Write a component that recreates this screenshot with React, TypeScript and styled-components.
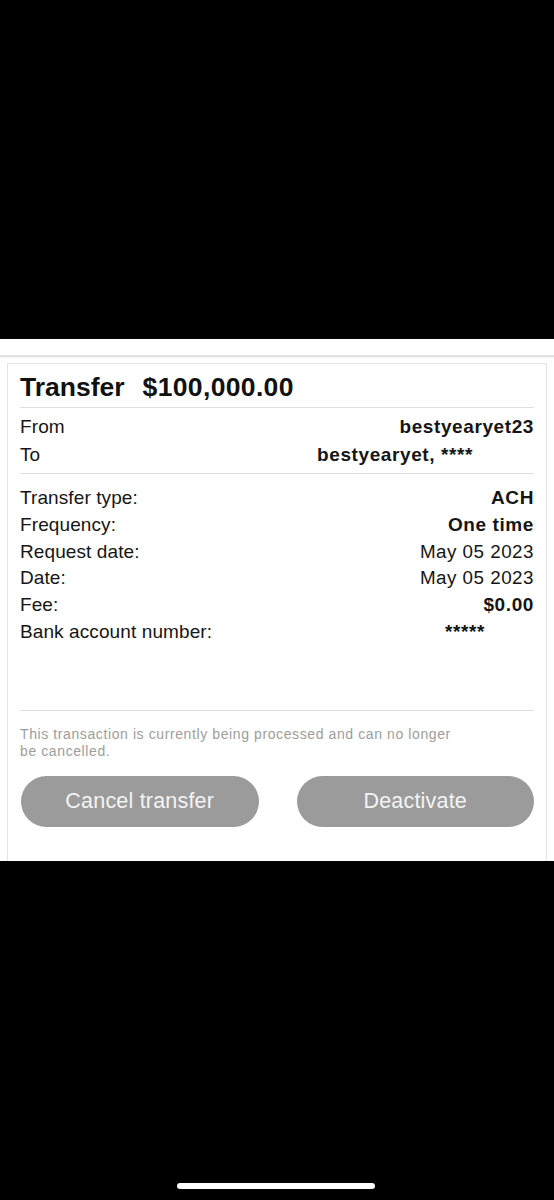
import React from "react";
import styled, { createGlobalStyle } from "styled-components";

const Global = createGlobalStyle`
  html, body { margin: 0; padding: 0; background: #000; }
  body { font-family: "Liberation Sans", Arial, sans-serif; -webkit-font-smoothing: antialiased; }
  * { box-sizing: border-box; }
`;

const Page = styled.div`
  width: 554px;
  height: 1200px;
  display: flex;
  flex-direction: column;
  background: #000;
  overflow: hidden;
`;

const BlackBand = styled.div<{ $h: number }>`
  height: ${(p) => p.$h}px;
  flex: 0 0 auto;
  background: #000;
`;

const Sheet = styled.div`
  height: 522px;
  flex: 0 0 auto;
  background: #fff;
  overflow: hidden;
  display: flex;
  flex-direction: column;
`;

const HeaderStrip = styled.div`
  flex: 0 0 auto;
  height: 18px;
  border-bottom: 2px solid #e3e3e3;
  box-shadow: 0 1px 1px rgba(0, 0, 0, 0.04);
`;

const Card = styled.section`
  flex: 0 0 auto;
  margin: 6px 7px 0;
  border: 1.5px solid #e4e4e4;
  border-bottom: none;
  padding: 7px 12px 60px;
  display: flex;
  flex-direction: column;
`;

const TitleRow = styled.h1`
  margin: 0;
  display: flex;
  gap: 18px;
  font-size: 26.5px;
  line-height: 32px;
  font-weight: 700;
  color: #111;
`;

const Amount = styled.span`
  letter-spacing: 0.35px;
`;

const Divider = styled.hr<{ $top: number; $bottom: number }>`
  border: none;
  height: 1px;
  background: #dedede;
  margin: ${(p) => p.$top}px 0 ${(p) => p.$bottom}px;
`;

const Group = styled.div<{ $lh: number }>`
  display: flex;
  flex-direction: column;
  line-height: ${(p) => p.$lh}px;
`;

const Row = styled.div`
  display: flex;
  justify-content: space-between;
  align-items: baseline;
  font-size: 19px;
  letter-spacing: 0.1px;
  color: #151515;
`;

const Label = styled.span``;

const Value = styled.span<{ $bold?: boolean; $inset?: number }>`
  font-weight: ${(p) => (p.$bold ? 700 : 400)};
  letter-spacing: ${(p) => (p.$bold ? "0.6px" : "0.5px")};
  margin-right: ${(p) => p.$inset ?? 0}px;
  font-size: ${(p) => (p.$bold ? "19px" : "18.8px")};
`;

const Spacer = styled.div<{ $h: number }>`
  height: ${(p) => p.$h}px;
`;

const Note = styled.p`
  margin: 0;
  font-size: 14px;
  line-height: 17px;
  letter-spacing: 0.6px;
  color: #9d9d9d;
`;

const Actions = styled.div`
  margin-top: 16px;
  display: grid;
  grid-template-columns: 1fr 1fr;
  gap: 38px;
  padding-left: 1px;
`;

const PillButton = styled.button`
  height: 51px;
  border: none;
  border-radius: 26px;
  background: #9b9b9b;
  color: #f4f4f4;
  font-family: "Liberation Sans", Arial, sans-serif;
  font-size: 21.5px;
  letter-spacing: 0.2px;
  padding: 0;
`;

const BottomArea = styled.div`
  flex: 1 1 auto;
  background: #000;
  display: flex;
  justify-content: center;
  padding-top: 322px;
`;

const HomeIndicator = styled.div`
  width: 198px;
  height: 6px;
  border-radius: 3px;
  background: #fff;
  margin-left: -2px;
`;

const details: { label: string; value: string; bold?: boolean; inset?: number }[] = [
  { label: "Transfer type:", value: "ACH", bold: true },
  { label: "Frequency:", value: "One time", bold: true },
  { label: "Request date:", value: "May 05 2023" },
  { label: "Date:", value: "May 05 2023" },
  { label: "Fee:", value: "$0.00", bold: true },
  { label: "Bank account number:", value: "*****", bold: true, inset: 49 },
];

export default function App() {
  return (
    <>
      <Global />
      <Page>
        <BlackBand $h={339} />
        <Sheet>
          <HeaderStrip />
          <Card>
            <TitleRow>
              <span>Transfer</span>
              <Amount>$100,000.00</Amount>
            </TitleRow>
            <Divider $top={4} $bottom={5} />
            <Group $lh={28}>
              <Row>
                <Label>From</Label>
                <Value $bold>bestyearyet23</Value>
              </Row>
              <Row>
                <Label>To</Label>
                <Value $bold $inset={61}>bestyearyet, ****</Value>
              </Row>
            </Group>
            <Divider $top={4} $bottom={11} />
            <Group $lh={26.8}>
              {details.map((d) => (
                <Row key={d.label}>
                  <Label>{d.label}</Label>
                  <Value $bold={d.bold} $inset={d.inset}>
                    {d.value}
                  </Value>
                </Row>
              ))}
            </Group>
            <Spacer $h={64} />
            <Divider $top={0} $bottom={15} />
            <Note>
              This transaction is currently being processed and can no longer
              <br />
              be cancelled.
            </Note>
            <Actions>
              <PillButton>Cancel transfer</PillButton>
              <PillButton>Deactivate</PillButton>
            </Actions>
          </Card>
        </Sheet>
        <BottomArea>
          <HomeIndicator />
        </BottomArea>
      </Page>
    </>
  );
}
